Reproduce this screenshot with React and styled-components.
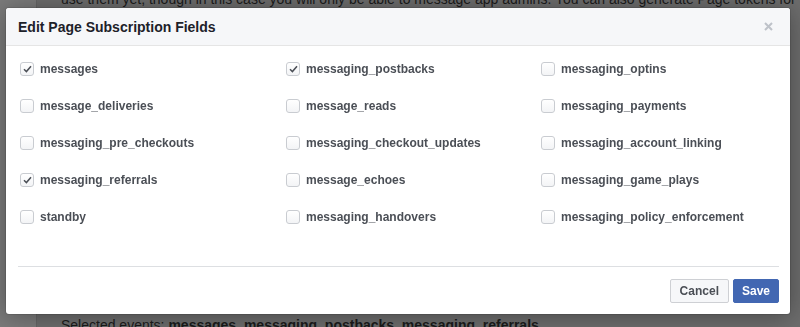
import React, { useState } from "react";
import styled, { createGlobalStyle } from "styled-components";

const GlobalStyle = createGlobalStyle`
  html, body {
    margin: 0;
    padding: 0;
    overflow: hidden;
  }
  body {
    font-family: "Liberation Sans", Arial, Helvetica, sans-serif;
  }
`;

const Page = styled.div`
  display: flex;
  height: 327px;
  background: #6d6d6d;
`;

const SideStrip = styled.div`
  width: 36px;
  background: #7b7b7b;
  border-right: 1px solid #656565;
`;

const PageMain = styled.div`
  flex: 1;
  display: flex;
  flex-direction: column;
  justify-content: space-between;
  padding-left: 24px;
  color: #1b1b1b;
  font-size: 14px;
  line-height: 18px;
  white-space: nowrap;
  overflow: hidden;
`;

const TopText = styled.p`
  margin: -10px 0 0;
`;

const BottomText = styled.p`
  margin: 0 0 -7px;

  b {
    font-weight: bold;
  }
`;

const Overlay = styled.div`
  position: fixed;
  inset: 0;
  padding: 8px 0 0 6px;
`;

const Modal = styled.div`
  width: 784px;
  height: 306px;
  background: #fff;
  border-radius: 3px;
  box-shadow: 0 2px 26px rgba(0, 0, 0, 0.35), 0 0 0 1px rgba(0, 0, 0, 0.1);
  display: flex;
  flex-direction: column;
  overflow: hidden;
`;

const Header = styled.div`
  height: 37px;
  display: flex;
  align-items: center;
  justify-content: space-between;
  padding: 0 12px;
  background: #f6f7f9;
  border-bottom: 1px solid #e5e5e5;
`;

const Title = styled.h2`
  margin: 0;
  font-size: 14px;
  font-weight: bold;
  color: #1d2129;
`;

const CloseButton = styled.button`
  border: none;
  background: none;
  padding: 0;
  width: 16px;
  height: 16px;
  display: flex;
  align-items: center;
  justify-content: center;
  cursor: pointer;
  margin-right: 2px;
`;

const Body = styled.div`
  flex: 1;
  padding: 4px 12px 0 14px;
`;

const Grid = styled.div`
  display: grid;
  grid-template-columns: 266px 255px 1fr;
  grid-auto-rows: 37px;
`;

const Option = styled.label`
  display: flex;
  align-items: center;
  gap: 6px;
  font-size: 12px;
  font-weight: bold;
  color: #4b4f56;
  cursor: pointer;
`;

const Box = styled.span`
  width: 12px;
  height: 12px;
  border: 1px solid #c9ccd1;
  border-radius: 3px;
  background: linear-gradient(#ffffff, #f3f4f6);
  display: flex;
  align-items: center;
  justify-content: center;
  flex-shrink: 0;
`;

const Divider = styled.div`
  height: 1px;
  background: #dddfe2;
  margin: 0 11px 0 12px;
`;

const Footer = styled.div`
  display: flex;
  justify-content: flex-end;
  gap: 4px;
  padding: 12px 11px 11px 12px;
`;

const Button = styled.button`
  height: 24px;
  padding: 0 ${({ primary }) => (primary ? "8px" : "9px")};
  font-family: "Liberation Sans", Arial, sans-serif;
  font-size: 12px;
  font-weight: bold;
  border-radius: 2px;
  border: 1px solid ${({ primary }) => (primary ? "#4267b2" : "#ced0d4")};
  background: ${({ primary }) => (primary ? "#4267b2" : "#f6f7f9")};
  color: ${({ primary }) => (primary ? "#fff" : "#4b4f56")};
  cursor: pointer;
`;

const FIELDS = [
  ["messages", true],
  ["messaging_postbacks", true],
  ["messaging_optins", false],
  ["message_deliveries", false],
  ["message_reads", false],
  ["messaging_payments", false],
  ["messaging_pre_checkouts", false],
  ["messaging_checkout_updates", false],
  ["messaging_account_linking", false],
  ["messaging_referrals", true],
  ["message_echoes", false],
  ["messaging_game_plays", false],
  ["standby", false],
  ["messaging_handovers", false],
  ["messaging_policy_enforcement", false],
];

const Check = () => (
  <svg width="9" height="8" viewBox="0 0 9 8">
    <path
      d="M1 4.3 L3.4 6.6 L8 1.2"
      fill="none"
      stroke="#4b4f56"
      strokeWidth="1.5"
    />
  </svg>
);

const App = () => {
  const [checked, setChecked] = useState(
    Object.fromEntries(FIELDS.map(([name, on]) => [name, on]))
  );

  const toggle = (name) =>
    setChecked((prev) => ({ ...prev, [name]: !prev[name] }));

  return (
    <>
      <GlobalStyle />
      <Page>
        <SideStrip />
        <PageMain>
          <TopText>
            use them yet, though in this case you will only be able to message
            app admins. You can also generate Page tokens for
          </TopText>
          <BottomText>
            Selected events:{" "}
            <b>messages, messaging_postbacks, messaging_referrals</b>
          </BottomText>
        </PageMain>
      </Page>

      <Overlay>
        <Modal>
          <Header>
            <Title>Edit Page Subscription Fields</Title>
            <CloseButton aria-label="Close">
              <svg width="9" height="9" viewBox="0 0 9 9">
                <path
                  d="M1 1 L8 8 M8 1 L1 8"
                  stroke="#bec2c9"
                  strokeWidth="2"
                />
              </svg>
            </CloseButton>
          </Header>

          <Body>
            <Grid>
              {FIELDS.map(([name]) => (
                <Option key={name} onClick={() => toggle(name)}>
                  <Box>{checked[name] && <Check />}</Box>
                  {name}
                </Option>
              ))}
            </Grid>
          </Body>

          <Divider />
          <Footer>
            <Button>Cancel</Button>
            <Button primary>Save</Button>
          </Footer>
        </Modal>
      </Overlay>
    </>
  );
};

export default App;
